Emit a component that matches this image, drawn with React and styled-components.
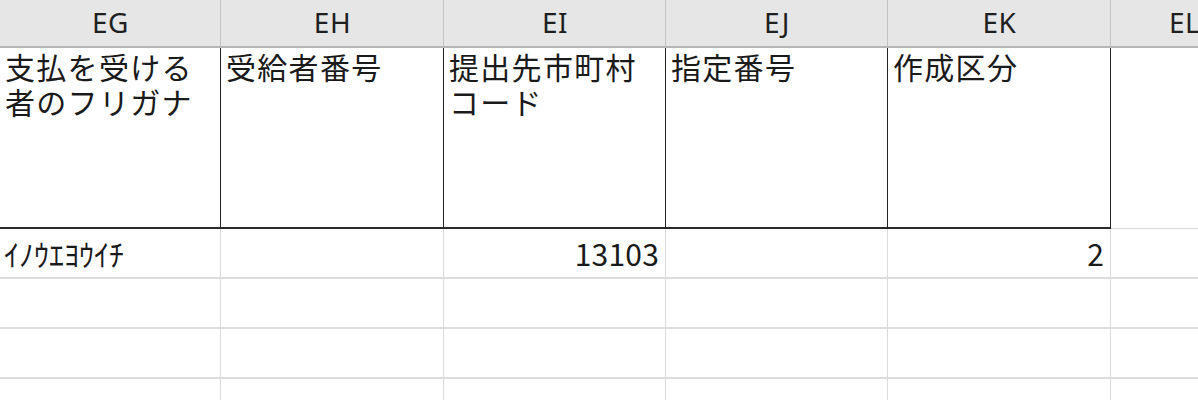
import React from 'react';
import styled, { createGlobalStyle } from 'styled-components';

const GlobalStyle = createGlobalStyle`
  html, body {
    margin: 0;
    padding: 0;
    background: #ffffff;
    overflow: hidden;
  }
  * {
    box-sizing: border-box;
  }
`;

const columns = [
  { id: 'EG', width: 221, title: ['支払を受ける', '者のフリガナ'], value: 'ｲﾉｳｴﾖｳｲﾁ', align: 'left' },
  { id: 'EH', width: 223, title: ['受給者番号'], value: '', align: 'left' },
  { id: 'EI', width: 222, title: ['提出先市町村', 'コード'], value: '13103', align: 'right' },
  { id: 'EJ', width: 222, title: ['指定番号'], value: '', align: 'left' },
  { id: 'EK', width: 223, title: ['作成区分'], value: '2', align: 'right' },
];

const EMPTY_ROWS = 3;

const Sheet = () => (
  <Grid $template={`${columns.map((c) => `${c.width}px`).join(' ')} 1fr`}>
    {columns.map((c) => (
      <ColumnHead key={c.id}>{c.id}</ColumnHead>
    ))}
    <ColumnHead $last>EL</ColumnHead>

    {columns.map((c) => (
      <TitleCell key={c.id}>
        {c.title.map((line) => (
          <TitleLine key={line}>{line}</TitleLine>
        ))}
      </TitleCell>
    ))}
    <TitleCell $outside />

    {columns.map((c) => (
      <Cell key={c.id} $align={c.align} $kana={c.id === 'EG'}>
        {c.value}
      </Cell>
    ))}
    <Cell />

    {Array.from({ length: EMPTY_ROWS }).map((_, r) =>
      [...columns, { id: 'EL' }].map((c) => <Cell key={`${r}-${c.id}`} />)
    )}
  </Grid>
);

const App = () => (
  <>
    <GlobalStyle />
    <Sheet />
  </>
);

const Grid = styled.div`
  display: grid;
  grid-template-columns: ${(p) => p.$template};
  grid-template-rows: 48px 181px repeat(4, 50px);
  width: 1198px;
  height: 400px;
  overflow: hidden;
  font-family: "Noto Sans CJK JP", "Noto Sans", sans-serif;
  color: #1a1a1a;
`;

const ColumnHead = styled.div`
  display: flex;
  align-items: center;
  justify-content: ${(p) => (p.$last ? 'flex-start' : 'center')};
  padding: 0 0 2px ${(p) => (p.$last ? '58px' : '1px')};
  background: #e6e6e6;
  border-right: 1px solid #c4c4c4;
  border-bottom: 2px solid #b6b6b6;
  font-family: "Noto Sans", "Noto Sans CJK JP", sans-serif;
  font-size: 28px;
  letter-spacing: 0.5px;
  color: #1f1f1f;
`;

const TitleCell = styled.div`
  padding: 1px 4px 0 5px;
  border-right: 1px solid ${(p) => (p.$outside ? 'transparent' : '#222222')};
  border-bottom: ${(p) => (p.$outside ? '1px solid #d9d9d9' : '2px solid #2a2a2a')};
  font-size: 30px;
  letter-spacing: 1.3px;
  white-space: nowrap;
`;

const TitleLine = styled.div`
  height: 35px;
  line-height: 35px;
`;

const Cell = styled.div`
  display: flex;
  align-items: center;
  justify-content: ${(p) => (p.$align === 'right' ? 'flex-end' : 'flex-start')};
  padding: 0 6px 0 4px;
  border-right: 1px solid #d9d9d9;
  border-bottom: 2px solid #dcdcdc;
  font-size: 30px;
  letter-spacing: ${(p) => (p.$kana ? '0' : '0.2px')};
`;

export default App;
